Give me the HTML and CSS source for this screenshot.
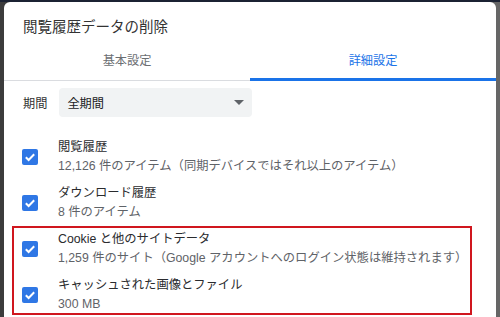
FILE: index.html
```html
<!DOCTYPE html>
<html lang="ja">
<head>
  <meta charset="UTF-8" />
  <meta name="viewport" content="width=device-width, initial-scale=1.0" />
  <title>閲覧履歴データの削除</title>
  <link rel="stylesheet" href="styles.css">
</head>
<body>
  <div class="dialog">
    <h1 class="title">閲覧履歴データの削除</h1>

    <div class="tabs">
      <div class="tab">基本設定</div>
      <div class="tab active">詳細設定</div>
    </div>

    <div class="period">
      <span class="period-label">期間</span>
      <div class="select">
        <span>全期間</span>
        <span class="arrow"></span>
      </div>
    </div>

    <div class="items">
      <div class="item">
        <span class="check"><svg width="16" height="16" viewBox="0 0 16 16"><path d="M3.8 8.3 L6.6 11 L12.2 5.3" fill="none" stroke="#fff" stroke-width="2"/></svg></span>
        <div class="item-text">
          <div class="item-label">閲覧履歴</div>
          <div class="item-sub">12,126 件のアイテム（同期デバイスではそれ以上のアイテム）</div>
        </div>
      </div>
      <div class="item">
        <span class="check"><svg width="16" height="16" viewBox="0 0 16 16"><path d="M3.8 8.3 L6.6 11 L12.2 5.3" fill="none" stroke="#fff" stroke-width="2"/></svg></span>
        <div class="item-text">
          <div class="item-label">ダウンロード履歴</div>
          <div class="item-sub">8 件のアイテム</div>
        </div>
      </div>

      <div class="highlight">
        <div class="item">
          <span class="check"><svg width="16" height="16" viewBox="0 0 16 16"><path d="M3.8 8.3 L6.6 11 L12.2 5.3" fill="none" stroke="#fff" stroke-width="2"/></svg></span>
          <div class="item-text">
            <div class="item-label">Cookie と他のサイトデータ</div>
            <div class="item-sub">1,259 件のサイト（Google アカウントへのログイン状態は維持されます）</div>
          </div>
        </div>
        <div class="item">
          <span class="check"><svg width="16" height="16" viewBox="0 0 16 16"><path d="M3.8 8.3 L6.6 11 L12.2 5.3" fill="none" stroke="#fff" stroke-width="2"/></svg></span>
          <div class="item-text">
            <div class="item-label">キャッシュされた画像とファイル</div>
            <div class="item-sub">300 MB</div>
          </div>
        </div>
      </div>
    </div>
  </div>
</body>
</html>
```

FILE: styles.css
```css
html, body {
  height: 100%;
}
body {
  margin: 0;
  overflow: hidden;
  border-top: 2px solid #1b2233;
  background: linear-gradient(to right, #3c3c3c 0, #3c3c3c 4px, #666 496px, #666 100%);
  font-family: 'Liberation Sans', 'Noto Sans CJK JP', sans-serif;
  color: #202124;
}
.dialog {
  margin: 0 4px;
  height: 100%;
  background: #fff;
  border-radius: 6px 6px 0 0;
}
.title {
  margin: 0;
  padding: 15px 19px 0;
  font-size: 14.5px;
  font-weight: normal;
  line-height: 20px;
  color: #333;
}
.tabs {
  display: flex;
}
.tab {
  flex: 1;
  text-align: center;
  padding: 14px 0 9px;
  font-size: 12.2px;
  line-height: 20px;
  color: #6b6e72;
  border-bottom: 1px solid #dadce0;
}
.tab.active {
  color: #1a73e8;
  border-bottom-color: #1a73e8;
  box-shadow: inset 0 -2px 0 #1a73e8;
}
.period {
  display: flex;
  align-items: center;
  gap: 12px;
  margin-top: 7px;
  padding-left: 19px;
  font-size: 12.2px;
  color: #333;
}
.select {
  width: 193px;
  height: 29px;
  box-sizing: border-box;
  display: flex;
  align-items: center;
  justify-content: space-between;
  padding: 0 8px;
  background: #f1f3f4;
  border-radius: 4px;
  color: #202124;
}
.arrow {
  width: 0;
  height: 0;
  border-left: 5px solid transparent;
  border-right: 5px solid transparent;
  border-top: 5px solid #5f6368;
}
.items {
  margin-top: 17px;
}
.item {
  display: flex;
  align-items: center;
  gap: 20px;
  padding: 4px 0 4px 18px;
  height: 38px;
}
.check {
  width: 16px;
  height: 16px;
  border-radius: 2px;
  background: #2f77e5;
  display: flex;
}
.item-text {
  font-size: 12.3px;
  line-height: 19px;
}
.item-label {
  color: #2a2b2e;
}
.item-sub {
  color: #5f6368;
}
.highlight {
  position: relative;
}
.highlight::before {
  content: '';
  position: absolute;
  left: 8px;
  top: 0;
  width: 460px;
  height: 89px;
  box-sizing: border-box;
  border: 2px solid #d0161e;
}
```
